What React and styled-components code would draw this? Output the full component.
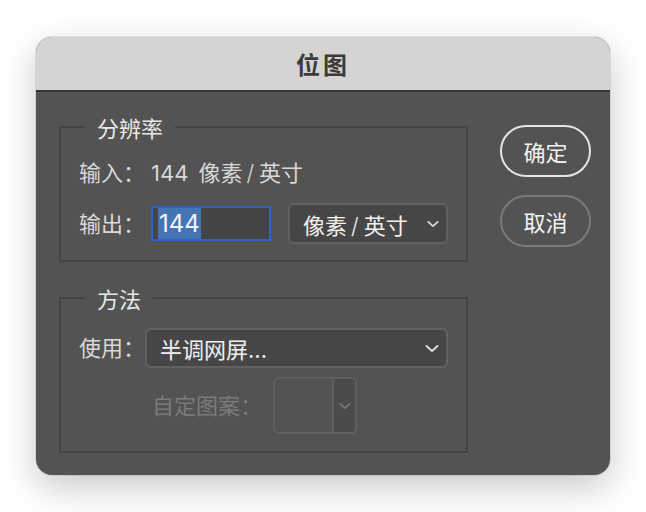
import React from 'react';
import styled, { createGlobalStyle } from 'styled-components';

const GlobalStyle = createGlobalStyle`
  html, body {
    margin: 0;
    padding: 0;
    background: #ffffff;
  }

  body {
    font-family: Inter, "Noto Sans CJK SC", sans-serif;
  }
`;

const Page = styled.div`
  padding: 37px 36px;
`;

const Dialog = styled.div`
  width: 574px;
  border-radius: 16px;
  overflow: hidden;
  background: #535353;
  box-shadow: 0 0 0 1px rgba(0, 0, 0, 0.08), 0 12px 36px rgba(0, 0, 0, 0.22);
`;

const TitleBar = styled.div`
  height: 53px;
  background: #d5d4d2;
  border-bottom: 2px solid #333333;
  display: flex;
  align-items: center;
  justify-content: center;
  font-family: "Noto Sans CJK SC", sans-serif;
  font-size: 24px;
  font-weight: 700;
  letter-spacing: 3px;
  color: #3b3b3b;
`;

const Body = styled.div`
  display: flex;
  gap: 32px;
  padding: 23px 19px 22px 23px;
`;

const Groups = styled.div`
  width: 410px;
  display: flex;
  flex-direction: column;
  gap: 24px;
`;

const Group = styled.fieldset`
  margin: 0;
  min-width: 0;
  border: 2px solid #444444;
  padding: ${p => p.$top}px 18px ${p => p.$bottom}px 18px;
  display: flex;
  flex-direction: column;
  gap: ${p => p.$gap}px;
`;

const Legend = styled.legend`
  margin-left: 6px;
  padding: 0 12px;
  font-family: "Noto Sans CJK SC", sans-serif;
  font-size: 22px;
  line-height: 24px;
  color: #e8e8e8;
`;

const Row = styled.div`
  display: flex;
  align-items: center;
  height: ${p => p.$h}px;
  padding-left: ${p => p.$indent || 0}px;
`;

const Label = styled.span`
  font-size: 22px;
  line-height: 28px;
  color: ${p => (p.$disabled ? '#7a7a7a' : '#d8d8d8')};
  margin-right: ${p => p.$space || 0}px;
  white-space: nowrap;
`;

const Value = styled.span`
  display: flex;
  gap: 10px;
  font-size: 22px;
  line-height: 28px;
  color: #d8d8d8;
  white-space: nowrap;
`;

const Slash = styled.span`
  margin: 0 5px 0 4px;
  font-weight: 300;
`;

const NumberField = styled.div`
  width: 120px;
  height: 35px;
  box-sizing: border-box;
  border: 2px solid #2c63c6;
  background: #444444;
  display: flex;
  align-items: center;
  padding-left: 5px;
  margin-right: 17px;
`;

const Selected = styled.span`
  background: #4574b5;
  color: #f4f4f4;
  font-size: 24px;
  line-height: 31px;
  padding: 0 1px;
`;

const Select = styled.div`
  width: ${p => p.$w}px;
  height: ${p => p.$h}px;
  box-sizing: border-box;
  border: 2px solid #616161;
  border-radius: 6px;
  background: #464646;
  display: flex;
  align-items: center;
  justify-content: space-between;
  padding: 0 7px 0 13px;
  font-size: 22px;
  color: #f0f0f0;
  white-space: nowrap;
`;

const PatternBox = styled.div`
  width: 84px;
  height: 57px;
  box-sizing: border-box;
  border: 2px solid #5f5f5f;
  border-radius: 6px;
  display: grid;
  grid-template-columns: 57px 1fr;
  overflow: hidden;
`;

const PatternArrow = styled.div`
  border-left: 2px solid #5f5f5f;
  background: #4b4b4b;
  display: flex;
  align-items: center;
  justify-content: center;
`;

const Buttons = styled.div`
  display: flex;
  flex-direction: column;
  gap: 18px;
  margin-top: 10px;
`;

const Button = styled.button`
  width: 91px;
  height: 52px;
  border-radius: 26px;
  border: 2px solid ${p => (p.$primary ? '#e4e4e4' : '#7b7b7b')};
  background: transparent;
  color: #f2f2f2;
  font-family: "Noto Sans CJK SC", sans-serif;
  font-size: 22px;
  padding: 0;
`;

const Chevron = ({ color = '#dddddd', size = 14 }) => (
  <svg width={size} height={size / 2 + 2} viewBox="0 0 14 9">
    <path d="M1.5 2 L7 7 L12.5 2" fill="none" stroke={color} strokeWidth="2" strokeLinecap="round" strokeLinejoin="round" />
  </svg>
);

const Unit = () => (
  <span>
    像素<Slash>/</Slash>英寸
  </span>
);

export default function App() {
  return (
    <Page>
      <GlobalStyle />
      <Dialog>
        <TitleBar>位图</TitleBar>
        <Body>
          <Groups>
            <Group $top={20} $bottom={16} $gap={16}>
              <Legend>分辨率</Legend>
              <Row $h={28}>
                <Label $space={6}>输入：</Label>
                <Value>
                  <span>144</span>
                  <Unit />
                </Value>
              </Row>
              <Row $h={41}>
                <Label $space={6}>输出：</Label>
                <NumberField>
                  <Selected>144</Selected>
                </NumberField>
                <Select $w={160} $h={41}>
                  <Unit />
                  <Chevron size={12} />
                </Select>
              </Row>
            </Group>
            <Group $top={18} $bottom={17} $gap={9}>
              <Legend>方法</Legend>
              <Row $h={40}>
                <Label>使用：</Label>
                <Select $w={303} $h={40}>
                  半调网屏...
                  <Chevron />
                </Select>
              </Row>
              <Row $h={57} $indent={73}>
                <Label $disabled $space={11}>自定图案：</Label>
                <PatternBox>
                  <div />
                  <PatternArrow>
                    <Chevron color="#777777" size={12} />
                  </PatternArrow>
                </PatternBox>
              </Row>
            </Group>
          </Groups>
          <Buttons>
            <Button $primary>确定</Button>
            <Button>取消</Button>
          </Buttons>
        </Body>
      </Dialog>
    </Page>
  );
}
